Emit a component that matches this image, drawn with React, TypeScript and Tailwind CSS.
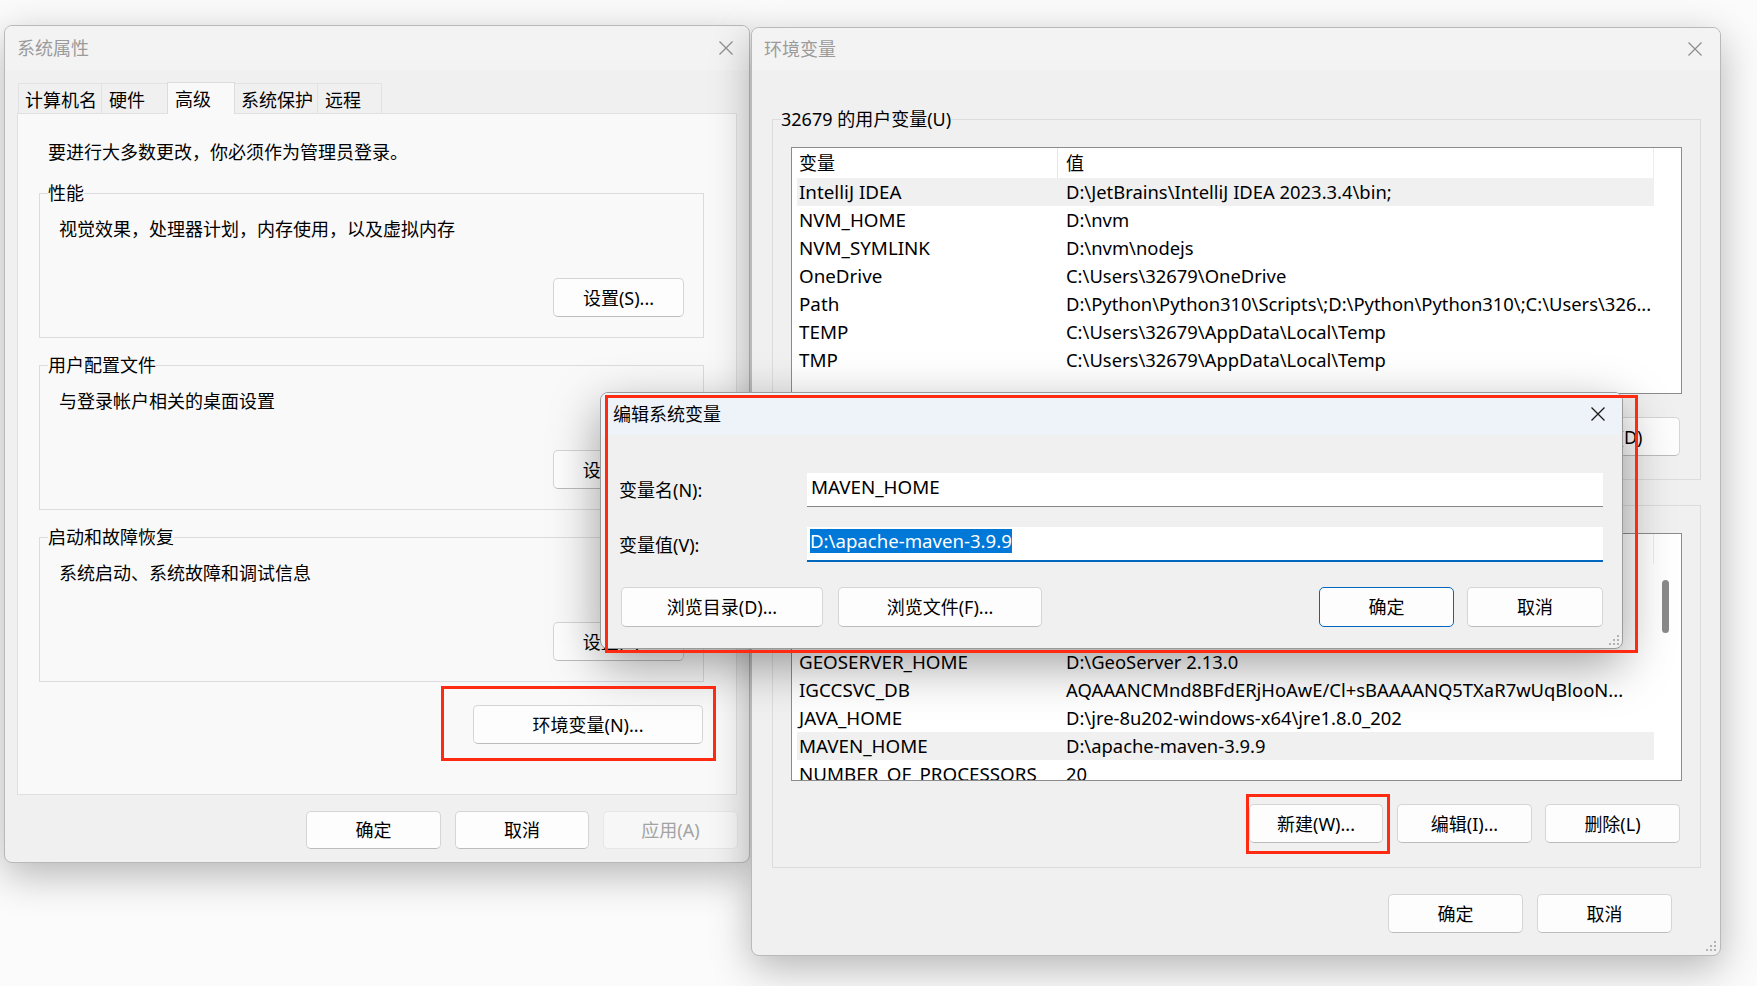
import React from "react";

const CloseX = ({ color }: { color: string }) => (
  <svg width="16" height="16" viewBox="0 0 16 16" fill="none">
    <path d="M1.5 1.5L14.5 14.5M14.5 1.5L1.5 14.5" stroke={color} strokeWidth="1.25" />
  </svg>
);

const Grip = () => (
  <svg width="11" height="11" viewBox="0 0 11 11">
    {[
      [9, 1],
      [9, 5],
      [5, 5],
      [9, 9],
      [5, 9],
      [1, 9],
    ].map(([x, y], i) => (
      <rect key={i} x={x} y={y} width="2" height="2" fill="#b3b3b3" />
    ))}
  </svg>
);

type BtnProps = {
  children: React.ReactNode;
  className?: string;
  variant?: "normal" | "primary" | "disabled";
};

function Btn({ children, className = "", variant = "normal" }: BtnProps) {
  const v =
    variant === "primary"
      ? "border border-[#0067c0] bg-[#fdfdfd] text-black"
      : variant === "disabled"
      ? "border border-[#e7e7e7] bg-[#f7f7f7] text-[#a3a3a3]"
      : "border border-[#d5d5d5] border-b-[#bcbcbc] bg-[#fdfdfd] text-black";
  return (
    <div
      className={`flex shrink-0 items-center justify-center rounded-[5px] text-[18px] leading-[24px] whitespace-nowrap ${v} ${className}`}
    >
      {children}
    </div>
  );
}

function Group({ title, text, btn, className = "" }: { title: string; text: string; btn: string; className?: string }) {
  return (
    <fieldset className={`border border-[#dcdcdc] ${className}`}>
      <legend className="ml-[8px] px-0">{title}</legend>
      <div className="flex flex-col pb-[20px] pl-[19px] pr-[19px]">
        <div className="mt-[12px]">{text}</div>
        <Btn className="mt-[37px] h-[39px] w-[131px] self-end">{btn}</Btn>
      </div>
    </fieldset>
  );
}

type Row = { k: string; v: string; hidden?: boolean };

function ListView({
  rows,
  className = "",
  selected,
  scroll = false,
  hideHeader = false,
}: {
  rows: Row[];
  className?: string;
  selected: number;
  scroll?: boolean;
  hideHeader?: boolean;
}) {
  return (
    <div className={`flex overflow-hidden border border-[#8c8c8c] bg-white ${className}`}>
      <div className="flex w-[862px] shrink-0 flex-col">
        <div className="flex h-[30px] shrink-0">
          <div className="flex h-full w-[266px] shrink-0 items-center border-r border-[#e6e6e6] pl-[7px]">
            <span className={hideHeader ? "invisible" : ""}>变量</span>
          </div>
          <div className="flex h-full flex-1 items-center border-r border-[#ececec] pl-[8px]">
            <span className={hideHeader ? "invisible" : ""}>值</span>
          </div>
        </div>
        <div className="flex flex-col pl-[5px]">
          {rows.map((r, i) => (
            <div
              key={i}
              className={`flex h-[28px] shrink-0 items-center whitespace-nowrap ${i === selected ? "bg-[#f0f0f0]" : ""} ${
                r.hidden ? "invisible" : ""
              }`}
            >
              <div className="w-[261px] shrink-0 overflow-hidden pl-[2px] text-[18.8px]">{r.k}</div>
              <div className="flex-1 overflow-hidden pl-[8px] text-[18.4px]">{r.v}</div>
            </div>
          ))}
        </div>
      </div>
      <div className="flex-1">
        {scroll && <div className="ml-[8px] mt-[46px] h-[53px] w-[7px] rounded-full bg-[#8a8a8a]" />}
      </div>
    </div>
  );
}

const userRows: Row[] = [
  { k: "IntelliJ IDEA", v: String.raw`D:\JetBrains\IntelliJ IDEA 2023.3.4\bin;` },
  { k: "NVM_HOME", v: String.raw`D:\nvm` },
  { k: "NVM_SYMLINK", v: String.raw`D:\nvm\nodejs` },
  { k: "OneDrive", v: String.raw`C:\Users\32679\OneDrive` },
  { k: "Path", v: String.raw`D:\Python\Python310\Scripts\;D:\Python\Python310\;C:\Users\326...` },
  { k: "TEMP", v: String.raw`C:\Users\32679\AppData\Local\Temp` },
  { k: "TMP", v: String.raw`C:\Users\32679\AppData\Local\Temp` },
];

const sysRows: Row[] = [
  { k: "ComSpec", v: String.raw`C:\WINDOWS\system32\cmd.exe`, hidden: true },
  { k: "configsetroot", v: String.raw`C:\WINDOWS\ConfigSetRoot`, hidden: true },
  { k: "DriverData", v: String.raw`C:\Windows\System32\Drivers\DriverData`, hidden: true },
  { k: "GEOSERVER_HOME", v: String.raw`D:\GeoServer 2.13.0` },
  { k: "IGCCSVC_DB", v: "AQAAANCMnd8BFdERjHoAwE/Cl+sBAAAANQ5TXaR7wUqBlooN..." },
  { k: "JAVA_HOME", v: String.raw`D:\jre-8u202-windows-x64\jre1.8.0_202` },
  { k: "MAVEN_HOME", v: String.raw`D:\apache-maven-3.9.9` },
  { k: "NUMBER_OF_PROCESSORS", v: "20" },
];

function LeftWindow() {
  const tabs = [
    { t: "计算机名", c: "w-[83px] h-[30px] bg-[#f0f0f0] border-l border-t border-[#e2e2e2] pt-[4px]" },
    { t: "硬件", c: "w-[66px] h-[30px] bg-[#f0f0f0] border-l border-t border-[#e2e2e2] pt-[4px] pl-[7px]" },
    { t: "高级", c: "w-[68px] h-[32px] -mb-[1px] relative z-10 bg-[#f9f9f9] border-l border-t border-r border-[#dcdcdc] pt-[4px] pl-[7px]" },
    { t: "系统保护", c: "w-[82px] h-[30px] bg-[#f0f0f0] border-t border-[#e2e2e2] pt-[4px]" },
    { t: "远程", c: "w-[65px] h-[30px] bg-[#f0f0f0] border-l border-t border-r border-[#e2e2e2] pt-[4px] pl-[7px]" },
  ];
  return (
    <div className="absolute left-[4px] top-[25px] flex h-[838px] w-[746px] flex-col overflow-hidden rounded-[8px] border border-[#b9b9b9] bg-[#f0f0f0] shadow-[0_12px_40px_rgba(0,0,0,0.28)]">
      <div className="flex h-[44px] shrink-0 items-center justify-between bg-[#f3f3f3] pl-[12px] pr-[15px]">
        <span className="text-[#9b9b9b]">系统属性</span>
        <CloseX color="#8f8f8f" />
      </div>
      <div className="flex flex-col px-[12px] pt-[12px]">
        <div className="flex h-[31px] items-end pl-[1px]">
          {tabs.map((tb) => (
            <div key={tb.t} className={`flex shrink-0 items-start pl-[6px] ${tb.c}`}>
              {tb.t}
            </div>
          ))}
        </div>
        <div className="flex h-[682px] flex-col border border-[#e0e0e0] bg-[#f9f9f9] pl-[21px] pr-[32px] pt-[26px]">
          <div className="ml-[9px]">要进行大多数更改，你必须作为管理员登录。</div>
          <Group className="mt-[17px]" title="性能" text="视觉效果，处理器计划，内存使用，以及虚拟内存" btn="设置(S)..." />
          <Group className="mt-[15px]" title="用户配置文件" text="与登录帐户相关的桌面设置" btn="设置(E)..." />
          <Group className="mt-[15px]" title="启动和故障恢复" text="系统启动、系统故障和调试信息" btn="设置(T)..." />
          <Btn className="mr-[1px] mt-[23px] h-[39px] w-[230px] self-end">环境变量(N)...</Btn>
        </div>
        <div className="-mr-[1px] mt-[16px] flex justify-end gap-[14px]">
          <Btn className="h-[38px] w-[135px]">确定</Btn>
          <Btn className="h-[38px] w-[134px]">取消</Btn>
          <Btn variant="disabled" className="h-[38px] w-[135px]">
            应用(A)
          </Btn>
        </div>
      </div>
    </div>
  );
}

function RightWindow() {
  return (
    <div className="absolute left-[751px] top-[27px] flex h-[929px] w-[970px] flex-col overflow-hidden rounded-[8px] border border-[#b9b9b9] bg-[#f0f0f0] shadow-[0_12px_40px_rgba(0,0,0,0.28)]">
      <div className="flex h-[42px] shrink-0 items-center justify-between bg-[#f3f3f3] pl-[12px] pr-[17px]">
        <span className="text-[#9b9b9b]">环境变量</span>
        <CloseX color="#8f8f8f" />
      </div>
      <div className="flex flex-col pl-[20px] pr-[19px]">
        <fieldset className="mt-[37px] border border-[#dcdcdc]">
          <legend className="ml-[8px] px-0">32679 的用户变量(U)</legend>
          <div className="flex flex-col px-[18px] pb-[23px]">
            <ListView className="mt-[16px] h-[247px]" rows={userRows} selected={0} />
            <div className="mr-[2px] mt-[23px] flex justify-end">
              <Btn className="h-[39px] w-[134px]">新建(N)...</Btn>
              <Btn className="ml-[14px] h-[39px] w-[135px]">编辑(E)...</Btn>
              <Btn className="ml-[13px] h-[39px] w-[135px]">删除(D)</Btn>
            </div>
          </div>
        </fieldset>
        <fieldset className="mt-[13px] border border-[#dcdcdc]">
          <legend className="invisible ml-[8px] px-0">系统变量(S)</legend>
          <div className="flex flex-col px-[18px] pb-[24px]">
            <ListView className="mt-[16px] h-[248px]" rows={sysRows} selected={6} scroll hideHeader />
            <div className="mr-[2px] mt-[23px] flex justify-end">
              <Btn className="h-[39px] w-[134px]">新建(W)...</Btn>
              <Btn className="ml-[14px] h-[39px] w-[135px]">编辑(I)...</Btn>
              <Btn className="ml-[13px] h-[39px] w-[135px]">删除(L)</Btn>
            </div>
          </div>
        </fieldset>
        <div className="mr-[29px] mt-[26px] flex justify-end gap-[14px]">
          <Btn className="h-[39px] w-[135px]">确定</Btn>
          <Btn className="h-[39px] w-[135px]">取消</Btn>
        </div>
      </div>
      <div className="absolute bottom-[4px] right-[4px]">
        <Grip />
      </div>
    </div>
  );
}

function EditDialog() {
  return (
    <div className="absolute left-[600px] top-[392px] flex h-[257px] w-[1023px] flex-col overflow-hidden rounded-[8px] border border-[#9a9a9a] bg-[#f0f0f0] shadow-[0_16px_50px_rgba(0,0,0,0.38)]">
      <div className="flex h-[42px] shrink-0 items-center justify-between bg-[#eef2f9] pl-[12px] pr-[16px]">
        <span>编辑系统变量</span>
        <CloseX color="#1a1a1a" />
      </div>
      <div className="flex flex-col pl-[18px] pr-[19px] pt-[38px]">
        <div className="flex items-center">
          <div className="w-[188px] shrink-0">变量名(N):</div>
          <div className="flex h-[34px] flex-1 items-start border-b border-[#868686] bg-white pl-[4px] pt-[2px] text-[18.8px]">
            MAVEN_HOME
          </div>
        </div>
        <div className="mt-[20px] flex items-center">
          <div className="w-[188px] shrink-0">变量值(V):</div>
          <div className="flex h-[35px] flex-1 items-start border-b-2 border-[#0067c0] bg-white pl-[3px] pt-[2px] text-[18.6px]">
            <span className="bg-[#0078d7] text-white">D:\apache-maven-3.9.9</span>
          </div>
        </div>
        <div className="mt-[25px] flex pl-[2px]">
          <Btn className="h-[40px] w-[202px]">浏览目录(D)...</Btn>
          <Btn className="ml-[15px] h-[40px] w-[204px]">浏览文件(F)...</Btn>
          <div className="flex-1" />
          <Btn variant="primary" className="h-[40px] w-[135px]">
            确定
          </Btn>
          <Btn className="ml-[13px] h-[40px] w-[136px]">取消</Btn>
        </div>
      </div>
      <div className="absolute bottom-[3px] right-[3px]">
        <Grip />
      </div>
    </div>
  );
}

export default function App() {
  return (
    <div className="relative h-[986px] w-[1757px] overflow-hidden bg-[#fbfbfb] font-['Noto_Sans','Noto_Sans_CJK_SC',sans-serif] text-[18px] leading-[24px] text-black">
      <LeftWindow />
      <RightWindow />
      <EditDialog />
      <div className="absolute left-[441px] top-[686px] h-[75px] w-[275px] border-[3px] border-[#ff2a12]" />
      <div className="absolute left-[605px] top-[395px] h-[258px] w-[1033px] border-[3px] border-[#ff2a12]" />
      <div className="absolute left-[1246px] top-[794px] h-[60px] w-[144px] border-[3px] border-[#ff2a12]" />
    </div>
  );
}
